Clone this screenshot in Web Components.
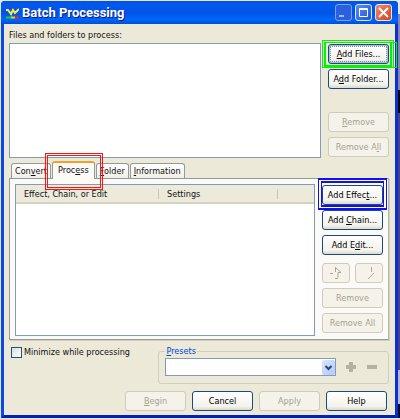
<!DOCTYPE html>
<html lang="en">
<head>
<meta charset="utf-8">
<title>Batch Processing</title>
<style>
    body {
        margin: 0;
        padding: 1px 2px 0 1px;
        background: linear-gradient(#dfe8f4 0 14px, #8a83b8 14px 90px, #05050f 90px 113px, #473f8c 113px 370px, #b9b4dc 370px 404px, #0a0a20 404px) right top / 3px 100% no-repeat #dfe8f4;
        font: 9px/12px "DejaVu Sans Condensed", "DejaVu Sans", sans-serif;
        color: #111;
        --face: #ece9d8;
        --field-border: #7f9db9;
    }

    .row {
        display: flex;
        gap: 7px;
    }

    .row > xp-list {
        flex: 1;
    }

    .files {
        padding-top: 2px;
    }

    .caption {
        padding: 5px 0 0;
    }

    .stack {
        display: flex;
        flex-direction: column;
        gap: 5px;
        width: 61px;
        padding: 1px 0;
    }

    .stack .apart {
        margin-top: 18px;
    }

    .stack .near {
        margin-top: 3px;
    }

    .effects .stack {
        padding-bottom: 3px;
    }

    .pair {
        display: flex;
        gap: 5px;
    }

    .pair > xp-button {
        flex: 1;
    }

    .options {
        display: flex;
        justify-content: space-between;
        padding: 5px 0 0 2px;
    }

    .actions {
        display: flex;
        justify-content: flex-end;
        gap: 6px;
        padding: 7px 2px 4px 0;
    }

    .actions > xp-button {
        width: 61px;
    }

    svg {
        display: block;
    }
</style>
</head>
<body>
<xp-window>
    <span slot="title">Batch Processing</span>

    <div class="caption">Files and folders to process:</div>
    <div class="row files">
        <xp-list></xp-list>
        <div class="stack">
            <xp-marker color="#00f400" kind="shifted"><xp-button focused><u>A</u>dd Files...</xp-button></xp-marker>
            <xp-button>A<u>d</u>d Folder...</xp-button>
            <xp-button class="apart" disabled><u>R</u>emove</xp-button>
            <xp-button disabled>Remove A<u>l</u>l</xp-button>
        </div>
    </div>

    <xp-tabs>
        <xp-tab slot="tabs">Con<u>v</u>ert</xp-tab>
        <xp-marker slot="tabs" color="#ff1414" kind="tab"><xp-tab active>Proc<u>e</u>ss</xp-tab></xp-marker>
        <xp-tab slot="tabs"><u>F</u>older</xp-tab>
        <xp-tab slot="tabs"><u>I</u>nformation</xp-tab>
        <div class="row effects">
            <xp-list columns="Effect, Chain, or Edit|Settings|"></xp-list>
            <div class="stack">
                <xp-marker color="#1010f0" kind="button"><xp-button>Add Effec<u>t</u>...</xp-button></xp-marker>
                <xp-button>Add <u>C</u>hain...</xp-button>
                <xp-button>Add E<u>d</u>it...</xp-button>
                <div class="pair near">
                    <xp-button disabled label="Move up">
                        <svg width="14" height="14" viewBox="0 0 14 14" fill="none" stroke="#aaa89a"><path d="M1 7.500h3M6.500 1v5M6 1l6 5.500h-3v5M6 12.500h3"/></svg>
                    </xp-button>
                    <xp-button disabled label="Move down">
                        <svg width="14" height="14" viewBox="0 0 14 14" fill="none" stroke="#aaa89a"><path d="M9.500 1v5M12 7l-6 6"/></svg>
                    </xp-button>
                </div>
                <xp-button disabled>Remove</xp-button>
                <xp-button disabled>Remove All</xp-button>
            </div>
        </div>
    </xp-tabs>

    <div class="options">
        <xp-check>Minimize while processing</xp-check>
        <xp-presets><u>P</u>resets</xp-presets>
    </div>

    <div class="actions">
        <xp-button disabled><u>B</u>egin</xp-button>
        <xp-button>Cancel</xp-button>
        <xp-button disabled>Apply</xp-button>
        <xp-button>Help</xp-button>
    </div>
</xp-window>

<script>
class XpWindow extends HTMLElement {
    constructor() {
        super();
        this.attachShadow({ mode: "open" }).innerHTML = `
            <style>
                :host {
                    display: block;
                    background: var(--face);
                    border: solid #0a3fe0;
                    border-width: 0 3px 3px;
                    border-color: #0a3fe0 #0831d0 #0020b8 #0a48e8;
                    border-radius: 4px 4px 0 0;
                }

                header {
                    display: flex;
                    align-items: center;
                    gap: 3px;
                    height: 23px;
                    margin: 0 -3px;
                    padding: 0 6px 0 4px;
                    box-sizing: border-box;
                    border-radius: 4px 4px 0 0;
                    background: linear-gradient(#0a50d8, #0058ee 15%, #0055e5 55%, #0066ff 80%, #0050d0);
                }

                h1 {
                    flex: 1;
                    margin: 0;
                    font: bold 13px/16px Roboto, "Liberation Sans", sans-serif;
                    color: #fff;
                    text-shadow: 1px 1px #0a1883;
                }

                button {
                    width: 17px;
                    height: 17px;
                    padding: 0;
                    border: 1px solid #dbe6ff;
                    border-radius: 3px;
                    background: linear-gradient(135deg, #5c8cf4, #1c55dd);
                }

                button.min {
                    border-color: #7ba2f0;
                    background: #2a5fdf;
                }

                button.close {
                    background: linear-gradient(135deg, #f08a6a, #d8401a);
                }

                svg {
                    display: block;
                }

                main {
                    padding: 0 6px 0 5px;
                }
            </style>
            <header>
                <svg width="14" height="12" viewBox="0 0 14 12" fill="none">
                    <path d="M1 3h2l3 4 2-4 2 3 4-4" stroke="#ffe83a" stroke-width="2"/>
                    <path d="M1 10.500h5" stroke="#20d020" stroke-width="2"/>
                    <path d="M6 10.500h4" stroke="#f0d020" stroke-width="2"/>
                    <path d="M10 10.500h4" stroke="#f02818" stroke-width="2"/>
                </svg>
                <h1><slot name="title"></slot></h1>
                <button class="min" aria-label="Minimize"><svg width="15" height="15"><path d="M3 10h5v2h-5z" fill="#9dbcf8"/></svg></button>
                <button aria-label="Maximize"><svg width="15" height="15" fill="none" stroke="#fff"><path d="M3.500 3.500h8v8h-8zM3 4.500h9"/></svg></button>
                <button class="close" aria-label="Close"><svg width="15" height="15" stroke="#fff" stroke-width="2"><path d="M3 3l9 9M12 3l-9 9"/></svg></button>
            </header>
            <main><slot></slot></main>
        `;
    }
}

class XpButton extends HTMLElement {
    constructor() {
        super();
        const disabled = this.hasAttribute("disabled") ? "disabled" : "";
        const label = this.getAttribute("label");

        this.attachShadow({ mode: "open" }).innerHTML = `
            <style>
                :host {
                    display: block;
                }

                button {
                    display: flex;
                    align-items: center;
                    justify-content: center;
                    width: 100%;
                    height: 20px;
                    padding: 0;
                    border: 1px solid #1d4a7c;
                    border-radius: 3px;
                    background: linear-gradient(#fff, #f3f2ec 80%, #dcd8cc);
                    font: inherit;
                    color: #000;
                    white-space: nowrap;
                }

                :host([focused]) button {
                    box-shadow: inset 0 0 0 1px #a4bcea;
                    outline: 1px dotted #888;
                    outline-offset: -3px;
                }

                button:disabled {
                    border-color: #cfccbd;
                    background: #f4f2e9;
                    color: #a5a292;
                }
            </style>
            <button ${disabled} ${label ? `aria-label="${label}"` : ""}><span><slot></slot></span></button>
        `;
    }
}

class XpList extends HTMLElement {
    constructor() {
        super();
        const columns = this.getAttribute("columns");
        const head = columns === null ? "" : `
            <table>
                <tr>${columns.split("|").map((name) => `<th>${name}</th>`).join("")}</tr>
            </table>`;

        this.attachShadow({ mode: "open" }).innerHTML = `
            <style>
                :host {
                    display: block;
                    border: 1px solid var(--field-border);
                    background: #fff;
                }

                table {
                    width: 100%;
                    table-layout: fixed;
                    border-collapse: collapse;
                    background: #ebeadb;
                }

                th {
                    box-sizing: border-box;
                    width: 40%;
                    height: 18px;
                    padding: 0 8px;
                    border-bottom: 2px solid #d6d2c2;
                    background: linear-gradient(#c9c6b6, #c9c6b6) right center / 1px 10px no-repeat;
                    font-weight: normal;
                    text-align: left;
                }

                th:first-child {
                    width: 48%;
                }

                th:last-child {
                    width: 12%;
                    background: none;
                }
            </style>
            ${head}
        `;
    }
}

class XpTabs extends HTMLElement {
    constructor() {
        super();
        this.attachShadow({ mode: "open" }).innerHTML = `
            <style>
                :host {
                    display: block;
                    padding-top: 3px;
                }

                nav {
                    display: flex;
                    align-items: flex-end;
                    gap: 1px;
                    padding-left: 2px;
                }

                section {
                    padding: 5px 5px 3px;
                    border: 1px solid #919b9c;
                    border-right-color: #b8b8ac;
                    background: #fbfaf6;
                    box-shadow: 1px 1px #d0cebf;
                }
            </style>
            <nav><slot name="tabs"></slot></nav>
            <section><slot></slot></section>
        `;
    }
}

class XpTab extends HTMLElement {
    constructor() {
        super();
        this.attachShadow({ mode: "open" }).innerHTML = `
            <style>
                :host {
                    display: block;
                }

                button {
                    display: block;
                    height: 15px;
                    padding: 0 3px;
                    border: 1px solid #919b9c;
                    border-bottom: 0;
                    border-radius: 3px 3px 0 0;
                    background: linear-gradient(#fff, #f0efe6);
                    font: inherit;
                    color: #111;
                }

                :host([active]) button {
                    height: 18px;
                    padding: 0 5px 2px;
                    margin-bottom: -1px;
                    border-top: 2px solid #f5a02c;
                    background: #fbfaf6;
                }
            </style>
            <button role="tab"><slot></slot></button>
        `;
    }
}

// Coloured double frame drawn over whatever it wraps.
class XpMarker extends HTMLElement {
    constructor() {
        super();
        this.attachShadow({ mode: "open" }).innerHTML = `
            <style>
                :host {
                    display: block;
                    position: relative;
                    z-index: 1;
                    color: inherit;
                }

                i {
                    position: absolute;
                    inset: -7px -4px -5px -4px;
                    border: 5px double ${this.getAttribute("color")};
                    border-width: 5px 4px;
                    pointer-events: none;
                }

                i + i {
                    display: none;
                }

                :host([kind="tab"]) i {
                    inset: -8px -8px -12px -7px;
                    border-width: 3px;
                }

                :host([kind="shifted"]) i {
                    inset: -4px -5px -4px -6px;
                    border: 1px solid ${this.getAttribute("color")};
                }

                :host([kind="shifted"]) i + i {
                    display: block;
                    inset: -2px -8px -4px -3px;
                }

                :host([kind="shifted"]) i + i + i {
                    inset: -2px -3px -3px -4px;
                    border-width: 1px 2px 2px;
                }
            </style>
            <slot></slot>
            <i></i><i></i><i></i>
        `;
    }
}

class XpCheck extends HTMLElement {
    constructor() {
        super();
        this.attachShadow({ mode: "open" }).innerHTML = `
            <style>
                :host {
                    display: block;
                }

                label {
                    display: flex;
                    align-items: center;
                    gap: 2px;
                    padding-top: 1px;
                }

                input {
                    appearance: none;
                    width: 11px;
                    height: 11px;
                    margin: 0;
                    border: 1px solid #1c5180;
                    background: linear-gradient(135deg, #dcdcd7, #fff);
                }
            </style>
            <label><input type="checkbox"><span><slot></slot></span></label>
        `;
    }
}

class XpPresets extends HTMLElement {
    constructor() {
        super();
        this.attachShadow({ mode: "open" }).innerHTML = `
            <style>
                :host {
                    display: block;
                    width: 61%;
                }

                fieldset {
                    display: flex;
                    align-items: center;
                    gap: 9px;
                    margin: 0;
                    padding: 1px 10px 7px 6px;
                    border: 1px solid #d0d0bf;
                    border-radius: 3px;
                }

                legend {
                    padding: 0 1px;
                    color: #0046d5;
                }

                .combo {
                    flex: 1;
                    display: grid;
                }

                .combo > * {
                    grid-area: 1 / 1;
                }

                select {
                    appearance: none;
                    width: 100%;
                    height: 18px;
                    border: 1px solid var(--field-border);
                    border-radius: 0;
                    background: #fff;
                    font: inherit;
                }

                .arrow {
                    justify-self: end;
                    align-self: center;
                    margin-right: 1px;
                    border-radius: 2px;
                    background: linear-gradient(135deg, #dbe5fd, #b2c8f8);
                    pointer-events: none;
                }

                button {
                    padding: 0;
                    border: 0;
                    background: none;
                }

                svg {
                    display: block;
                }
            </style>
            <fieldset>
                <legend><label for="preset"><slot></slot></label></legend>
                <div class="combo">
                    <select id="preset"><option></option></select>
                    <svg class="arrow" width="13" height="15" fill="none" stroke="#2c4676" stroke-width="2"><path d="M3.500 6l3 3 3-3"/></svg>
                </div>
                <button disabled aria-label="Add preset"><svg width="12" height="12" fill="#b4b1a3"><path d="M4 1h4v3h3v4h-3v3h-4v-3h-3v-4h3z"/></svg></button>
                <button disabled aria-label="Delete preset"><svg width="12" height="12" fill="#b4b1a3"><path d="M1 4h10v4h-10z"/></svg></button>
            </fieldset>
        `;
    }
}

customElements.define("xp-window", XpWindow);
customElements.define("xp-button", XpButton);
customElements.define("xp-list", XpList);
customElements.define("xp-tabs", XpTabs);
customElements.define("xp-tab", XpTab);
customElements.define("xp-marker", XpMarker);
customElements.define("xp-check", XpCheck);
customElements.define("xp-presets", XpPresets);
</script>
</body>
</html>
